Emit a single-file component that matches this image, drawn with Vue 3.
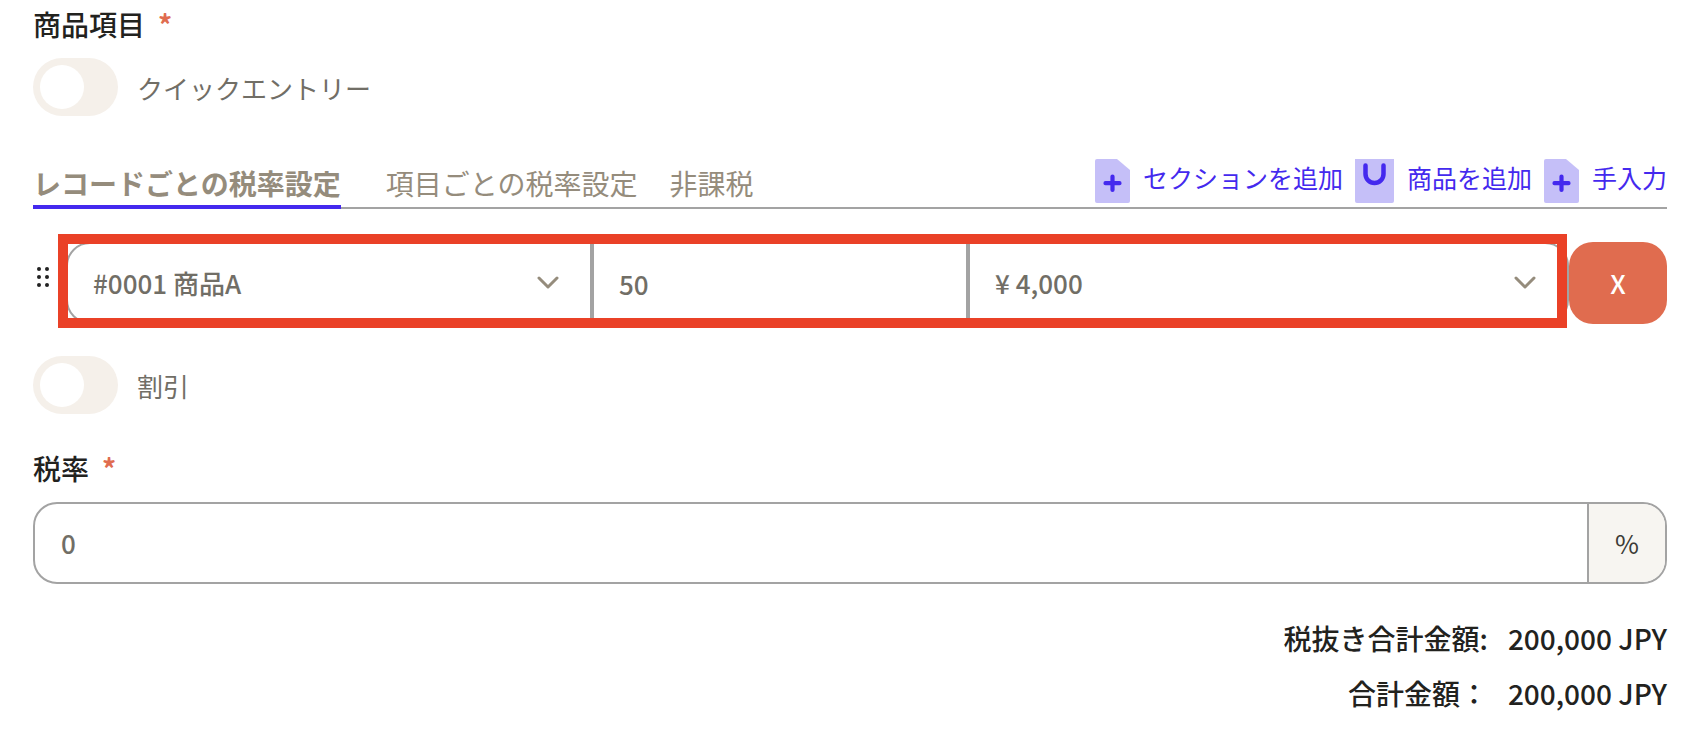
<script setup>
import { ref } from 'vue'

const quickEntry = ref(false)
const discount = ref(false)
const item = ref('a')
const quantity = ref('50')
const price = ref('4000')
const taxRate = ref('0')
const activeTab = ref(0)
const tabs = ['レコードごとの税率設定', '項目ごとの税率設定', '非課税']
const totals = [
  { label: '税抜き合計金額:', value: '200,000 JPY' },
  { label: '合計金額：', value: '200,000 JPY' },
]
</script>

<template>
  <main class="form">
    <h2 class="label">商品項目 <span class="required">*</span></h2>

    <label class="toggle">
      <input v-model="quickEntry" type="checkbox" class="switch" />
      <span>クイックエントリー</span>
    </label>

    <div class="bar">
      <nav class="tabs">
        <button
          v-for="(tab, i) in tabs"
          :key="tab"
          type="button"
          class="tab"
          :class="{ active: i === activeTab }"
          @click="activeTab = i"
        >{{ tab }}</button>
      </nav>
      <div class="actions">
        <button type="button" class="action">
          <svg width="35" height="44" viewBox="0 0 35 44" aria-hidden="true">
            <path d="M2 0H22L35 11V42Q35 44 33 44H2Q0 44 0 42V2Q0 0 2 0Z" fill="#c5bff8" />
            <path d="M17.500 17.500V31M10.500 24.200H24.500" stroke="#4429ee" stroke-width="4.200" stroke-linecap="round" />
          </svg>
          <span>セクションを追加</span>
        </button>
        <button type="button" class="action">
          <svg width="39" height="44" viewBox="0 0 39 44" aria-hidden="true">
            <path d="M0 0H39V42Q39 44 37 44H2Q0 44 0 42Z" fill="#c5bff8" />
            <path d="M10.500 6.500V15A9 9 0 0 0 28.500 15V6.500" fill="none" stroke="#4429ee" stroke-width="4.500" stroke-linecap="round" />
          </svg>
          <span>商品を追加</span>
        </button>
        <button type="button" class="action">
          <svg width="35" height="44" viewBox="0 0 35 44" aria-hidden="true">
            <path d="M2 0H22L35 11V42Q35 44 33 44H2Q0 44 0 42V2Q0 0 2 0Z" fill="#c5bff8" />
            <path d="M17.500 17.500V31M10.500 24.200H24.500" stroke="#4429ee" stroke-width="4.200" stroke-linecap="round" />
          </svg>
          <span>手入力</span>
        </button>
      </div>
    </div>

    <div class="line">
      <svg class="grip" width="14" height="22" viewBox="0 0 14 22" aria-hidden="true">
        <g fill="#222">
          <circle cx="3" cy="3" r="2" /><circle cx="11" cy="3" r="2" />
          <circle cx="3" cy="11" r="2" /><circle cx="11" cy="11" r="2" />
          <circle cx="3" cy="19" r="2" /><circle cx="11" cy="19" r="2" />
        </g>
      </svg>
      <div class="fields">
        <div class="cell item">
          <select v-model="item" aria-label="商品">
            <option value="a">#0001 商品A</option>
          </select>
          <svg class="chevron" width="22" height="14" viewBox="0 0 22 14" aria-hidden="true">
            <path d="M2 2L11 11L20 2" />
          </svg>
        </div>
        <div class="cell quantity">
          <input v-model="quantity" type="text" aria-label="数量" />
        </div>
        <div class="cell price">
          <select v-model="price" aria-label="価格">
            <option value="4000">¥ 4,000</option>
          </select>
          <svg class="chevron" width="22" height="14" viewBox="0 0 22 14" aria-hidden="true">
            <path d="M2 2L11 11L20 2" />
          </svg>
        </div>
        <div class="highlight"></div>
      </div>
      <button type="button" class="remove">X</button>
    </div>

    <label class="toggle discount">
      <input v-model="discount" type="checkbox" class="switch" />
      <span>割引</span>
    </label>

    <label class="label tax-label" for="tax">税率 <span class="required">*</span></label>
    <div class="tax">
      <input id="tax" v-model="taxRate" type="text" />
      <span class="unit">%</span>
    </div>

    <dl class="totals">
      <div v-for="t in totals" :key="t.label" class="total">
        <dt>{{ t.label }}</dt>
        <dd>{{ t.value }}</dd>
      </div>
    </dl>
  </main>
</template>

<style>
body {
  background: #fff;
}
</style>

<style scoped>
.form,
.form * {
  box-sizing: border-box;
}
.form {
  padding: 4px 39px 0 33px;
  font-family: "Noto Sans CJK JP", sans-serif;
  font-size: 28px;
  line-height: 40px;
  color: #22221e;
}
button,
input,
select {
  font: inherit;
  color: inherit;
  background: none;
  border: 0;
  margin: 0;
  padding: 0;
}
.label {
  display: flex;
  gap: 13px;
  margin: 0;
  font-size: 28px;
  font-weight: 500;
}
.required {
  font-weight: 700;
  color: #e06c4f;
}
.toggle {
  display: flex;
  align-items: center;
  gap: 19px;
  width: max-content;
  margin-top: 14px;
  font-size: 26px;
  color: #716e66;
}
.toggle span {
  padding-top: 2px;
}
.discount {
  margin-top: 32px;
}
.switch {
  appearance: none;
  display: flex;
  align-items: center;
  width: 85px;
  height: 58px;
  padding: 7px;
  border-radius: 29px;
  background: #f5f0ea;
}
.switch::before {
  content: "";
  width: 44px;
  height: 44px;
  border-radius: 50%;
  background: #fff;
}
.switch:checked {
  justify-content: flex-end;
  background: #4429ee;
}
.bar {
  display: flex;
  justify-content: space-between;
  height: 50px;
  margin-top: 43px;
  box-shadow: inset 0 -2px #a3a3a3;
}
.tabs {
  display: flex;
  align-items: flex-end;
  gap: 32px;
}
.tab {
  padding-bottom: 2px;
  color: #958c7c;
  border-bottom: 4px solid transparent;
}
.tab.active {
  margin-right: 13px;
  font-weight: 700;
  border-bottom-color: #4429ee;
}
.actions {
  display: flex;
  align-items: flex-start;
  gap: 12px;
}
.action {
  display: flex;
  gap: 13px;
  font-size: 25px;
  line-height: 36px;
  color: #4429ee;
}
.line {
  display: flex;
  align-items: center;
  margin-top: 33px;
}
.grip {
  margin: 0 16px 12px 3px;
}
.fields {
  position: relative;
  display: grid;
  grid-template-columns: 526fr 376fr 601fr;
  flex: 1;
  height: 82px;
  color: #716e66;
  font-size: 26px;
  font-weight: 500;
}
.cell {
  position: relative;
  display: flex;
  align-items: center;
  border: 2px solid #a3a3a3;
}
.cell select,
.cell input {
  appearance: none;
  width: 100%;
  height: 100%;
  padding: 0 25px;
}
.item {
  border-radius: 24px 0 0 24px;
}
.price {
  border-radius: 0 24px 24px 0;
}
.chevron {
  position: absolute;
  right: 31px;
  fill: none;
  stroke: #958c7c;
  stroke-width: 3;
  stroke-linecap: round;
  stroke-linejoin: round;
  pointer-events: none;
}
.highlight {
  position: absolute;
  inset: -8px 2px -4px -8px;
  border: 10px solid #ea4127;
  pointer-events: none;
}
.remove {
  width: 98px;
  height: 82px;
  border-radius: 24px;
  background: #e06c4f;
  color: #fff;
  font-size: 26px;
  font-weight: 500;
}
.tax-label {
  margin-top: 34px;
}
.tax {
  display: flex;
  height: 82px;
  margin-top: 14px;
  border: 2px solid #a3a3a3;
  border-radius: 24px;
  overflow: hidden;
  font-size: 26px;
}
.tax input {
  flex: 1;
  min-width: 0;
  padding: 0 26px;
  color: #716e66;
  font-weight: 500;
}
.unit {
  display: grid;
  place-items: center;
  width: 78px;
  background: #f7f5f1;
  border-left: 2px solid #a3a3a3;
  color: #3c3b37;
}
.totals {
  margin: 34px 0 0;
  font-weight: 500;
}
.total {
  display: flex;
  justify-content: flex-end;
  gap: 20px;
  margin-bottom: 15px;
}
.total dd {
  margin: 0;
}
</style>
